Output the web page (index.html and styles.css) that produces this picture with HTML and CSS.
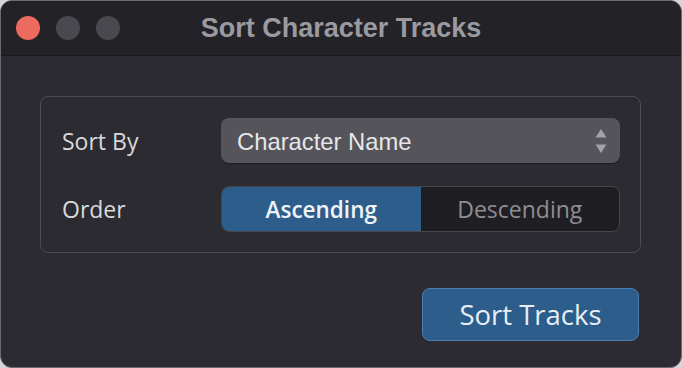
FILE: index.html
```html
<!DOCTYPE html>
<html lang="en">
<head>
    <meta charset="UTF-8">
    <meta name="viewport" content="width=device-width, initial-scale=1.0">
    <title>Sort Character Tracks</title>
    <link rel="stylesheet" href="styles.css">
</head>
<body>
    <div class="window">
        <div class="titlebar">
            <div class="lights">
                <span class="light close"></span>
                <span class="light"></span>
                <span class="light"></span>
            </div>
            <div class="title">Sort Character Tracks</div>
        </div>

        <div class="content">
            <div class="group">
                <div class="label">Sort By</div>
                <div class="popup">
                    <span class="popup-value">Character Name</span>
                    <svg class="stepper" width="12" height="26" viewBox="0 0 12 26">
                        <path d="M6 1 L11.5 9.5 L0.5 9.5 Z" fill="#a3a2a8"/>
                        <path d="M6 25 L11.5 16.5 L0.5 16.5 Z" fill="#a3a2a8"/>
                    </svg>
                </div>

                <div class="label">Order</div>
                <div class="segmented">
                    <div class="segment active">Ascending</div>
                    <div class="segment">Descending</div>
                </div>
            </div>

            <div class="actions">
                <button class="primary">Sort Tracks</button>
            </div>
        </div>
    </div>
</body>
</html>
```

FILE: styles.css
```css
body {
    margin: 0;
    background: #d6d6d8;
    font-family: "Open Sans", "Liberation Sans", sans-serif;
}

.window {
    box-sizing: border-box;
    width: 682px;
    height: 368px;
    background: #2c2b31;
    border: 1px solid #6b6a70;
    border-radius: 12px;
    overflow: hidden;
}

/* title bar */
.titlebar {
    position: relative;
    height: 54px;
    background: #232227;
    border-bottom: 1px solid #1b1a1e;
    display: flex;
    align-items: center;
    justify-content: center;
}

.lights {
    position: absolute;
    left: 15px;
    top: 15px;
    display: flex;
    gap: 16px;
}

.light {
    width: 24px;
    height: 24px;
    border-radius: 50%;
    background: #4a494f;
}

.light.close {
    background: #ec6a5e;
}

.title {
    font-family: "Liberation Sans", Arial, sans-serif;
    font-weight: 700;
    font-size: 27px;
    color: #9b9aa0;
}

/* body */
.content {
    padding: 40px 40px 0 39px;
}

.group {
    border: 1px solid #4d4c52;
    border-radius: 8px;
    padding: 21px 20px 20px 21px;
    display: grid;
    grid-template-columns: 159px 1fr;
    row-gap: 23px;
    align-items: center;
}

.label {
    font-size: 23px;
    color: #d9d9db;
}

.popup {
    height: 45px;
    box-sizing: border-box;
    background: #55545a;
    border-radius: 8px;
    box-shadow: 0 1px 0 #1c1b1f;
    display: flex;
    align-items: center;
    justify-content: space-between;
    padding: 0 13px 0 16px;
    font-family: "Liberation Sans", Arial, sans-serif;
    font-size: 23.8px;
    color: #e6e6e8;
}

.popup-value {
    padding-top: 3px;
}

.segmented {
    height: 46px;
    box-sizing: border-box;
    display: flex;
    border: 1px solid #47464c;
    border-radius: 8px;
    overflow: hidden;
    background: #1f1e23;
}

.segment {
    flex: 1;
    display: flex;
    align-items: center;
    justify-content: center;
    font-size: 23px;
    color: #8f8e94;
}

.segment.active {
    background: #2d5d8b;
    color: #eef3f8;
    font-weight: 600;
    font-size: 22.5px;
}

.actions {
    display: flex;
    justify-content: flex-end;
    padding: 35px 2px 0 0;
}

.primary {
    width: 217px;
    height: 53px;
    background: #2d5d8b;
    border: 1px solid #4c80b3;
    border-radius: 8px;
    color: #e8eef5;
    font-family: "Open Sans", "Liberation Sans", sans-serif;
    font-size: 27.5px;
}
```
